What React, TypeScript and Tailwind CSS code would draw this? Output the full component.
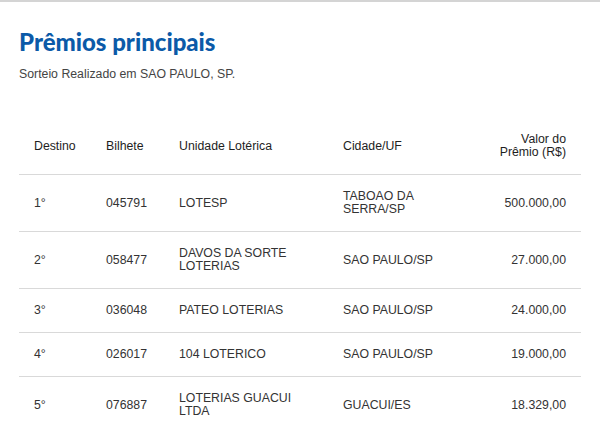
import React from "react"

type Row = {
  destino: string
  bilhete: string
  unidade: string
  cidade: string
  valor: string
}

const rows: Row[] = [
  { destino: "1°", bilhete: "045791", unidade: "LOTESP", cidade: "TABOAO DA SERRA/SP", valor: "500.000,00" },
  { destino: "2°", bilhete: "058477", unidade: "DAVOS DA SORTE LOTERIAS", cidade: "SAO PAULO/SP", valor: "27.000,00" },
  { destino: "3°", bilhete: "036048", unidade: "PATEO LOTERIAS", cidade: "SAO PAULO/SP", valor: "24.000,00" },
  { destino: "4°", bilhete: "026017", unidade: "104 LOTERICO", cidade: "SAO PAULO/SP", valor: "19.000,00" },
  { destino: "5°", bilhete: "076887", unidade: "LOTERIAS GUACUI LTDA", cidade: "GUACUI/ES", valor: "18.329,00" }
]

const App: React.FC = () => {
  return (
    <div className="min-h-[434px] bg-white border-t-2 border-[#d4d4d4] font-['Liberation_Sans',Arial,sans-serif]">
      <div className="px-[19px] pt-[25px]">
        <h1 className="font-['Lato',sans-serif] font-black text-[24px] leading-[30px] text-[#0b5aa8]">
          Prêmios principais
        </h1>
        <p className="mt-[10px] text-[12.3px] leading-[14px] text-[#444]">
          Sorteio Realizado em SAO PAULO, SP.
        </p>

        <table className="mt-[37px] w-full table-fixed border-collapse text-[12.3px] leading-[13px]">
          <colgroup>
            <col className="w-[72px]" />
            <col className="w-[73px]" />
            <col className="w-[164px]" />
            <col className="w-[130px]" />
            <col />
          </colgroup>
          <thead>
            <tr className="border-b border-[#d9d9d9] text-[#1e1e1e]">
              <th className="px-[15px] py-[15px] text-left font-normal">Destino</th>
              <th className="px-[15px] py-[15px] text-left font-normal">Bilhete</th>
              <th className="px-[15px] py-[15px] text-left font-normal">Unidade Lotérica</th>
              <th className="px-[15px] py-[15px] text-left font-normal">Cidade/UF</th>
              <th className="px-[15px] py-[15px] text-right font-normal">
                Valor do
                <br />
                Prêmio (R$)
              </th>
            </tr>
          </thead>
          <tbody className="text-[#333]">
            {rows.map((r, i) => (
              <tr key={r.destino} className={i < rows.length - 1 ? "border-b border-[#d9d9d9]" : ""}>
                <td className="px-[15px] py-[15px] align-middle">{r.destino}</td>
                <td className="px-[15px] py-[15px] align-middle">{r.bilhete}</td>
                <td className="px-[15px] py-[15px] align-middle">{r.unidade}</td>
                <td className="px-[15px] py-[15px] align-middle">{r.cidade}</td>
                <td className="px-[15px] py-[15px] align-middle text-right">{r.valor}</td>
              </tr>
            ))}
          </tbody>
        </table>
      </div>
    </div>
  )
}

export default App
